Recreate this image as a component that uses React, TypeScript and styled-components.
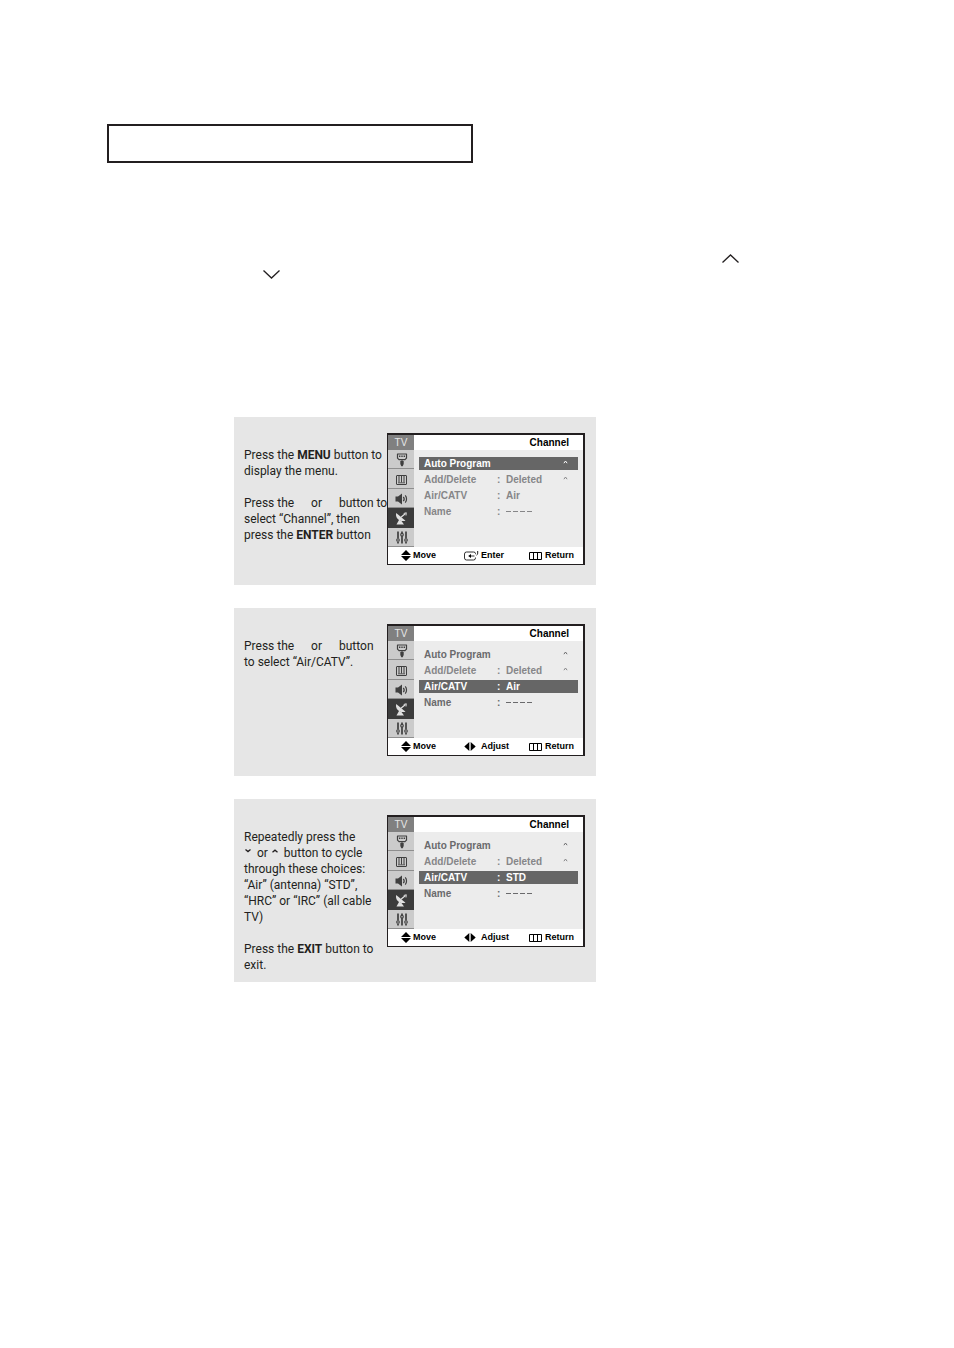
import React from 'react';
import styled, { createGlobalStyle, css } from 'styled-components';

const GlobalStyle = createGlobalStyle`
  *, *::before, *::after { box-sizing: border-box; }
  body { margin: 0; background: #fff; color: #231f20; }
  button { font: inherit; color: inherit; border: 0; padding: 0; margin: 0; background: none; text-align: left; }
  svg { display: block; flex: none; }
`;

const Page = styled.main`
  min-height: 100vh;
  padding: 124px 107px 64px;
  font-family: Roboto, 'Liberation Sans', sans-serif;
`;

const TitleBox = styled.header`
  max-width: 366px;
  height: 39px;
  border: 2px solid #231f20;
`;

const Intro = styled.section`
  display: flex;
  flex-direction: column;
  margin-top: 87px;
`;

const IntroLine = styled.div<{ $end?: boolean }>`
  display: flex;
  height: 16px;
  align-items: center;
  justify-content: ${p => (p.$end ? 'flex-end' : 'flex-start')};
  padding: 0 108px 0 156px;
`;

const Steps = styled.section`
  display: flex;
  flex-direction: column;
  gap: 23px;
  margin: 135px 0 0 127px;
  max-width: 362px;
`;

const Step = styled.article`
  display: flex;
  align-items: flex-start;
  justify-content: space-between;
  min-height: 168px;
  padding: 16px 11px 9px 10px;
  background: #e6e6e6;
`;

const Instructions = styled.div`
  flex: 1;
  min-width: 0;
  padding-top: 14px;
  font-size: 12px;
  line-height: 16px;
  white-space: nowrap;
`;

const Paragraph = styled.p`
  margin: 0;
  & + & { margin-top: 16px; }
`;

const KeyGap = styled.span`
  display: inline-block;
  width: 11px;
`;

const Key = styled.span`
  display: inline-block;
  width: 10px;
  height: 8px;
  padding-left: 1px;
`;

const Screen = styled.div`
  display: grid;
  grid-template-columns: 26px 1fr;
  flex: none;
  width: 198px;
  border: solid #231f20;
  border-width: 2px 2px 1px 1px;
  background: #fff;
  font-family: 'Liberation Sans', sans-serif;
  font-size: 10px;
  font-weight: 700;
  line-height: 13px;
`;

const Tabs = styled.nav`
  display: flex;
  flex-direction: column;
  height: 112px;
  background: #a0a0a0;
`;

const Source = styled.div`
  height: 15px;
  background: #808080;
  color: #e6e6e6;
  font-weight: 400;
  line-height: 15px;
  text-align: center;
`;

const Tab = styled.button<{ $active?: boolean }>`
  display: flex;
  flex: 1;
  align-items: center;
  justify-content: center;
  padding: 2px 0 0 1px;
  background: ${p => (p.$active ? '#3c3c3c' : '#cbcbcb')};
  color: ${p => (p.$active ? '#e0e0e0' : '#3f3f3f')};
  border-bottom: 1px solid ${p => (p.$active ? '#3c3c3c' : '#8e8e8e')};
`;

const Main = styled.div`
  display: flex;
  flex-direction: column;
`;

const ScreenTitle = styled.h2`
  height: 15px;
  margin: 0;
  padding-right: 14px;
  color: #000;
  font-size: 10px;
  line-height: 15px;
  text-align: right;
`;

const Menu = styled.div`
  display: flex;
  flex: 1;
  flex-direction: column;
  gap: 3px;
  padding: 7px 5px;
  background: #ececec;
`;

type Tone = 'selected' | 'dark' | 'light';

const tones = {
  selected: css`background: #666; color: #fff;`,
  dark: css`color: #6a6a6c;`,
  light: css`color: #868688;`,
};

const MenuRow = styled.button<{ $tone: Tone }>`
  display: grid;
  grid-template-columns: 73px 9px 1fr 6px;
  height: 13px;
  padding: 0 9px 0 5px;
  align-items: center;
  white-space: nowrap;
  ${p => tones[p.$tone]}

  > svg { align-self: start; margin-top: 3px; }
`;

const Dashes = styled.span`
  display: flex;
  gap: 2px;
  i { width: 5px; height: 1px; background: currentColor; }
`;

const Hints = styled.footer`
  display: grid;
  grid-column: 1 / -1;
  grid-template-columns: 63px 65px 1fr;
  height: 17px;
  padding: 0 0 1px 13px;
  color: #000;
  font-size: 9px;
  line-height: 14px;
`;

const Hint = styled.span<{ $icon: number }>`
  display: grid;
  grid-template-columns: ${p => p.$icon}px 1fr;
  align-items: center;
  white-space: nowrap;

  > svg { margin-top: 1px; }
`;

const Chevron = ({ down }: { down?: boolean }) => (
  <svg width="17" height="9" viewBox="0 0 17 9" fill="none" stroke="#231f20" strokeWidth="1.3">
    <path d={down ? 'M.5 .5 8.5 8 16.5 .5' : 'M.5 8.5 8.5 1 16.5 8.5'} />
  </svg>
);

const KeyMark = ({ down }: { down?: boolean }) => (
  <svg width="6" height="4" viewBox="0 0 6 4" fill="none" stroke="#231f20" strokeWidth="1.3">
    <path d={down ? 'M.5 .6 3 2.6 5.5 .6' : 'M.5 3.2 3 1.2 5.5 3.2'} />
  </svg>
);

const Caret = () => (
  <svg width="5" height="4" viewBox="0 0 5 4" fill="none" stroke="currentColor">
    <path d="M.9 3.200 2.500 1 4.100 3.200" />
  </svg>
);

const InputIcon = () => (
  <svg width="12" height="14" viewBox="0 0 12 14" fill="none" stroke="currentColor">
    <path d="M1.500 1h9v4.200L9 6.700H3L1.500 5.200z" strokeWidth="1.200" strokeLinejoin="round" />
    <path d="M3 3.300h1.400M5.300 3.300h1.400M7.600 3.300h1.400" strokeWidth="1.400" />
    <path d="M6 7v1" />
    <path d="M4.300 8h3.400v3L6.700 13.300H5.300L4.300 11z" fill="currentColor" stroke="none" />
  </svg>
);

const PictureIcon = () => (
  <svg width="11" height="10" viewBox="0 0 11 10" fill="none" stroke="currentColor">
    <rect x=".5" y=".5" width="10" height="9" rx=".5" />
    <path d="M3 1v6.500M5.500 1v6.500M8 1v6.500" strokeWidth="1" />
    <path d="M2 7.800h7" strokeWidth=".8" />
  </svg>
);

const SoundIcon = () => (
  <svg width="13" height="12" viewBox="0 0 13 12" fill="none" stroke="currentColor">
    <path d="M.5 3.500h2.500L7 .400v11.200L3 8.500H.5z" fill="currentColor" stroke="none" />
    <path d="M8.300 3.800c1 1.200 1 3.200 0 4.400M10.200 2.300c1.800 2 1.800 5.400 0 7.400" strokeWidth="1.200" />
  </svg>
);

const DishIcon = () => (
  <svg width="13" height="13" viewBox="0 0 13 13" fill="none" stroke="currentColor">
    <path d="M1.200 1C0 5.500 4 10.300 10.500 8.800z" fill="currentColor" stroke="none" />
    <path d="M6 5.300 10.500 1.500" strokeWidth="1.200" />
    <path d="M8.700 1.500 11.300 .7 11 3.500" strokeWidth=".9" />
    <path d="M4.300 7.500 1.500 12.500h7.500L6.500 9z" fill="currentColor" stroke="none" />
  </svg>
);

const SetupIcon = () => (
  <svg width="12" height="13" viewBox="0 0 12 13" fill="none" stroke="currentColor">
    <path d="M2 .5v7M2 11v1.500M6 .5v1.500M6 5v7.500M10 .5v7M10 11v1.500" strokeWidth="1.700" />
    <circle cx="2" cy="9" r="1.300" strokeWidth="1.100" />
    <circle cx="6" cy="3.700" r="1.300" strokeWidth="1.100" />
    <circle cx="10" cy="9" r="1.300" strokeWidth="1.100" />
  </svg>
);

const MoveIcon = () => (
  <svg width="10" height="11" viewBox="0 0 10 11"><path d="M5 0 10 5H0zM0 6h10L5 11z" /></svg>
);

const AdjustIcon = () => (
  <svg width="12" height="9" viewBox="0 0 12 9"><path d="M5.300 0v9L.3 4.500zM6.700 0v9l5-4.500z" /></svg>
);

const EnterIcon = () => (
  <svg width="15" height="10" viewBox="0 0 15 10" fill="none" stroke="#000">
    <path d="M11.500 3.200V2.500Q11.500 1 9.500 1h-7Q.5 1 .5 3v4q0 2 2 2h7q2 0 2-2v-.5" strokeWidth=".8" />
    <path d="M7 3v4L4.200 5z" fill="#000" stroke="none" />
    <path d="M6 5h4.500" strokeWidth=".8" />
    <path d="M13.700 0v2.200q0 1.400-1.200 2" strokeWidth=".9" />
  </svg>
);

const ReturnIcon = () => (
  <svg width="13" height="8" viewBox="0 0 13 8" fill="none" stroke="#000">
    <path d="M.5 .5h12v7H.5zM4.500 .5v7M8.500 .5v7" />
  </svg>
);

const tabs = [
  { name: 'Input', Icon: InputIcon },
  { name: 'Picture', Icon: PictureIcon },
  { name: 'Sound', Icon: SoundIcon },
  { name: 'Channel', Icon: DishIcon },
  { name: 'Setup', Icon: SetupIcon },
];

interface OsdProps {
  selected: string;
  signal: string;
  action: 'Enter' | 'Adjust';
}

function Osd({ selected, signal, action }: OsdProps) {
  const rows: { label: string; value?: React.ReactNode; more?: boolean; tone: Tone }[] = [
    { label: 'Auto Program', more: true, tone: 'dark' },
    { label: 'Add/Delete', value: 'Deleted', more: true, tone: 'light' },
    { label: 'Air/CATV', value: signal, tone: 'dark' },
    { label: 'Name', value: <Dashes><i /><i /><i /><i /></Dashes>, tone: 'dark' },
  ];
  return (
    <Screen>
      <Tabs>
        <Source>TV</Source>
        {tabs.map(({ name, Icon }) => (
          <Tab key={name} type="button" aria-label={name} $active={name === 'Channel'}>
            <Icon />
          </Tab>
        ))}
      </Tabs>
      <Main>
        <ScreenTitle>Channel</ScreenTitle>
        <Menu>
          {rows.map(row => (
            <MenuRow
              key={row.label}
              type="button"
              $tone={row.label === selected ? 'selected' : selected === 'Auto Program' ? 'light' : row.tone}
            >
              <span>{row.label}</span>
              <span>{row.value ? ':' : ''}</span>
              <span>{row.value}</span>
              {row.more && <Caret />}
            </MenuRow>
          ))}
        </Menu>
      </Main>
      <Hints>
        <Hint $icon={12}><MoveIcon />Move</Hint>
        <Hint $icon={17}>{action === 'Enter' ? <EnterIcon /> : <AdjustIcon />}{action}</Hint>
        <Hint $icon={16}><ReturnIcon />Return</Hint>
      </Hints>
    </Screen>
  );
}

export default function App() {
  return (
    <>
      <GlobalStyle />
      <Page>
        <TitleBox />
        <Intro>
          <IntroLine $end><Chevron /></IntroLine>
          <IntroLine><Chevron down /></IntroLine>
        </Intro>
        <Steps>
          <Step>
            <Instructions>
              <Paragraph>Press the <b>MENU</b> button to<br />display the menu.</Paragraph>
              <Paragraph>
                Press the <KeyGap /> or <KeyGap /> button to<br />
                select “Channel”, then<br />press the <b>ENTER</b> button
              </Paragraph>
            </Instructions>
            <Osd selected="Auto Program" signal="Air" action="Enter" />
          </Step>
          <Step>
            <Instructions>
              <Paragraph>
                Press the <KeyGap /> or <KeyGap /> button<br />to select “Air/CATV”.
              </Paragraph>
            </Instructions>
            <Osd selected="Air/CATV" signal="Air" action="Adjust" />
          </Step>
          <Step>
            <Instructions>
              <Paragraph>
                Repeatedly press the<br />
                <Key><KeyMark down /></Key> or <Key><KeyMark /></Key> button to cycle<br />
                through these choices:<br />“Air” (antenna) “STD”,<br />“HRC” or “IRC” (all cable<br />TV)
              </Paragraph>
              <Paragraph>Press the <b>EXIT</b> button to<br />exit.</Paragraph>
            </Instructions>
            <Osd selected="Air/CATV" signal="STD" action="Adjust" />
          </Step>
        </Steps>
      </Page>
    </>
  );
}
